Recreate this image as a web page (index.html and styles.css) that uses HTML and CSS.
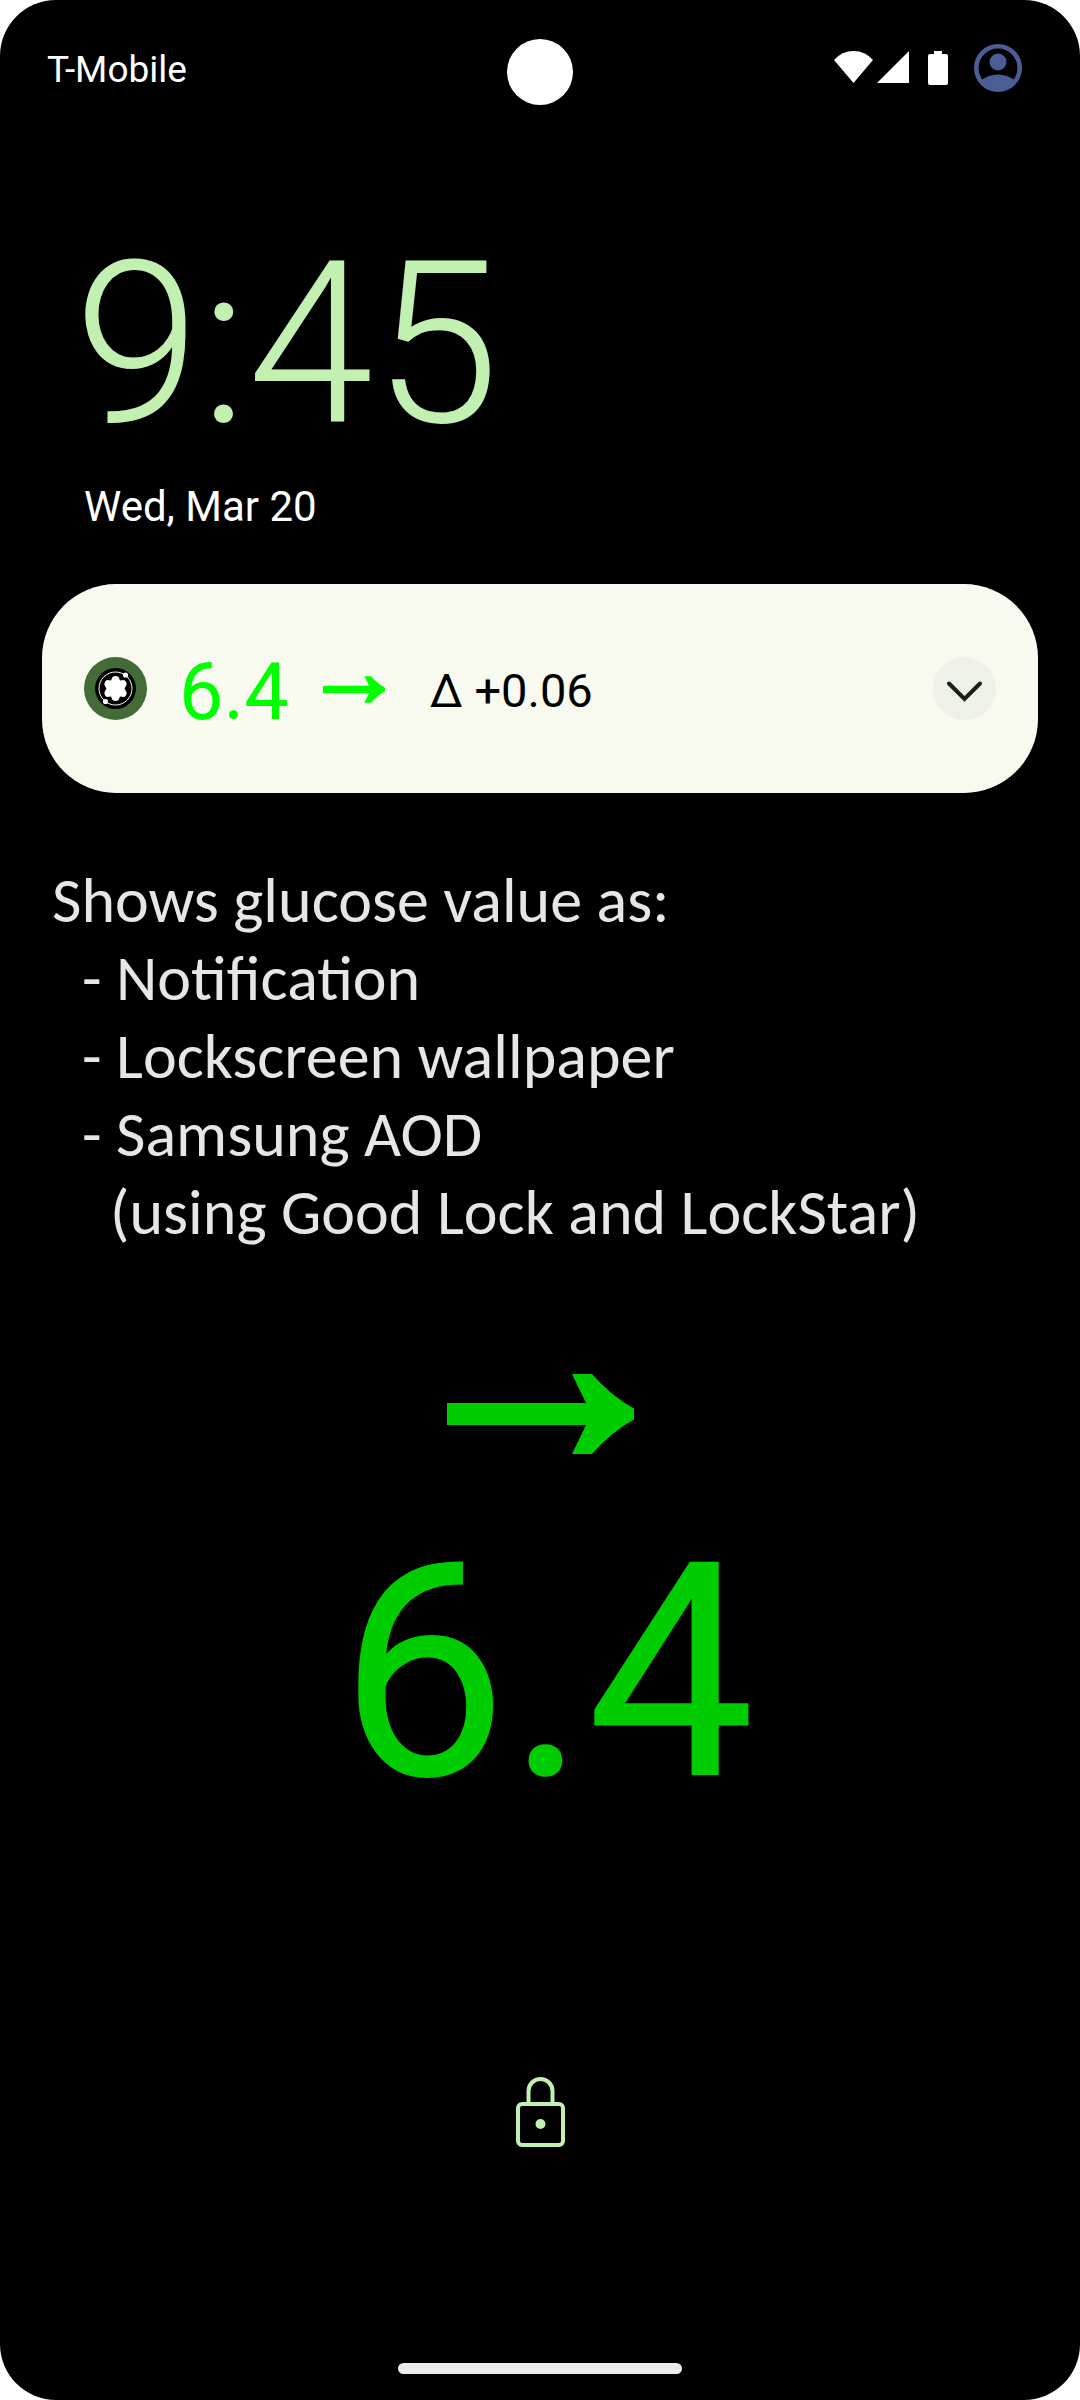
FILE: index.html
```html
<!DOCTYPE html>
<html lang="en">
<head>
<meta charset="utf-8">
<meta name="viewport" content="width=device-width, initial-scale=1">
<title>Lock screen</title>
<link rel="stylesheet" href="styles.css">
</head>
<body>
<div class="phone">
  <header class="status">
    <span class="carrier">T-Mobile</span>
    <span class="camera"></span>
    <div class="status-icons">
      <svg class="signals" viewBox="0 0 114 34" aria-hidden="true">
        <path d="M0 9Q8 0 19.500 0T39 9L19.500 32Z"/>
        <path d="M75 0V32H43Z"/>
        <path d="M100 0h8v3h4q2 0 2 2v27q0 2-2 2h-16q-2 0-2-2V5q0-2 2-2h4Z"/>
      </svg>
      <svg class="avatar" viewBox="0 0 48 48" aria-hidden="true">
        <circle cx="24" cy="24" r="21.700" fill="none" stroke="#4b5d94" stroke-width="4.600"/>
        <circle cx="24" cy="18" r="8.500"/>
        <path d="M7 36.500Q14 30.500 24 30.500T41 36.500Q35 46 24 46T7 36.500Z"/>
      </svg>
    </div>
  </header>

  <section class="clock">
    <time class="time">9:45</time>
    <span class="date">Wed, Mar 20</span>
  </section>

  <article class="notification">
    <svg class="app-icon" viewBox="0 0 63 63" aria-hidden="true">
      <circle cx="31.500" cy="31.500" r="31.500" fill="#426b38"/>
      <circle cx="31.500" cy="31.500" r="20.500"/>
      <circle cx="31.500" cy="31.500" r="16.500" fill="none" stroke="#fff" stroke-width="1"/>
      <path d="M28.500 20q3-2 6 0l1.500 3.500 4-.5q3 1.500 2.500 5l-2 3.500 2 3.500q.5 3.500-2.500 5l-4-.5-1.500 3.500q-3 2-6 0l-1.500-3.500-4 .5q-3-1.500-2.500-5l2-3.500-2-3.500q-.5-3.500 2.500-5l4 .5Z" fill="#fff"/>
      <circle cx="41.500" cy="18" r="2.600" fill="#fff"/>
      <circle cx="21.500" cy="44.500" r="2.600" fill="#fff"/>
    </svg>
    <span class="value">6.4</span>
    <svg class="trend" viewBox="0 0 187 80" aria-hidden="true"><path d="M0 29H139L125 0H145Q164 22 187 34.500V45.500Q164 58 145 80H125L139 51H0Z"/></svg>
    <span class="delta">Δ +0.06</span>
    <button class="expand" type="button" aria-label="Expand notification">
      <svg viewBox="0 0 63 63" aria-hidden="true"><path d="M16 26.500 31.500 42 47 26.500"/></svg>
    </button>
  </article>

  <section class="features">
    <p>Shows glucose value as:</p>
    <ul>
      <li>Notification</li>
      <li>Lockscreen wallpaper</li>
      <li>Samsung AOD</li>
    </ul>
    <p class="note">(using Good Lock and LockStar)</p>
  </section>

  <section class="reading">
    <svg class="reading-trend" viewBox="0 0 187 80" aria-hidden="true"><path d="M0 29H139L125 0H145Q164 22 187 34.500V45.500Q164 58 145 80H125L139 51H0Z"/></svg>
    <span class="reading-value">6.4</span>
  </section>

  <footer class="bottom">
    <svg class="lock" viewBox="0 0 49 70" aria-hidden="true">
      <rect x="2" y="27" width="45" height="41" rx="4"/>
      <path d="M12.500 27V14a12 12 0 0 1 24 0V27"/>
      <circle cx="24.500" cy="47" r="5"/>
    </svg>
    <span class="home-bar"></span>
  </footer>
</div>
</body>
</html>
```
FILE: styles.css
```css
* { box-sizing: border-box; }
body { margin: 0; background: #fff; font-family: Roboto, sans-serif; }
p, ul { margin: 0; padding: 0; }
svg { display: block; }
.phone {
  min-height: 100vh;
  display: flex;
  flex-direction: column;
  background: #000;
  color: #fff;
  border-radius: 56px;
}
.status {
  height: 136px;
  padding: 0 47px;
  display: grid;
  grid-template-columns: 1fr 66px 1fr;
  align-items: center;
}
.carrier { padding-top: 4px; font-size: 37px; line-height: 44px; }
.camera { height: 66px; margin-top: 7px; border-radius: 50%; background: #fff; }
.status-icons { padding-right: 11px; display: flex; justify-content: flex-end; align-items: center; gap: 26px; }
.signals { width: 114px; height: 34px; fill: #fff; }
.avatar { width: 48px; height: 48px; fill: #4b5d94; }
.clock { padding: 75px 74px 0; display: flex; flex-direction: column; }
.time { font-size: 227px; line-height: 266px; font-weight: 300; color: #c2f0b0; }
.date { padding-left: 10px; font-size: 42px; line-height: 60px; }
.notification {
  margin: 47px 42px 0;
  min-height: 209px;
  padding: 0 42px;
  border-radius: 74px;
  background: #f8faf0;
  color: #000;
  display: flex;
  align-items: center;
}
.app-icon { width: 63px; height: 63px; }
.value { margin-left: 32px; padding-top: 6px; font-size: 79px; line-height: 96px; color: #0f0; }
.trend { width: 62px; height: 27px; margin: 2px 0 0 34px; fill: #0f0; }
.delta { margin-left: 45px; padding-top: 4px; font-size: 47px; line-height: 56px; }
.expand { width: 63px; height: 63px; margin-left: auto; padding: 0; border: 0; border-radius: 50%; background: #eef1e8; }
.expand path { fill: none; stroke: #1a1e18; stroke-width: 4; stroke-linecap: round; }
.features { padding: 68px 52px 0; font-family: Carlito, Calibri, sans-serif; font-size: 64px; line-height: 78px; color: #e6e6e6; }
.features ul { padding-left: 30px; list-style: none; }
.features li { display: flex; }
.features li::before { content: "-"; width: 34px; }
.note { padding-left: 58px; }
.reading { padding-top: 123px; display: flex; flex-direction: column; align-items: center; gap: 4px; color: #00cd00; }
.reading-trend { width: 187px; height: 80px; fill: #00cd00; }
.reading-value { padding-left: 14px; font-size: 300px; line-height: 430px; }
.bottom { margin-top: auto; padding-bottom: 26px; display: flex; flex-direction: column; align-items: center; gap: 216px; }
.lock { width: 49px; height: 70px; fill: none; stroke: #c2f0b0; stroke-width: 4; }
.lock circle { fill: #c2f0b0; stroke: none; }
.home-bar { width: 284px; height: 11px; border-radius: 6px; background: #ebebeb; }
```
